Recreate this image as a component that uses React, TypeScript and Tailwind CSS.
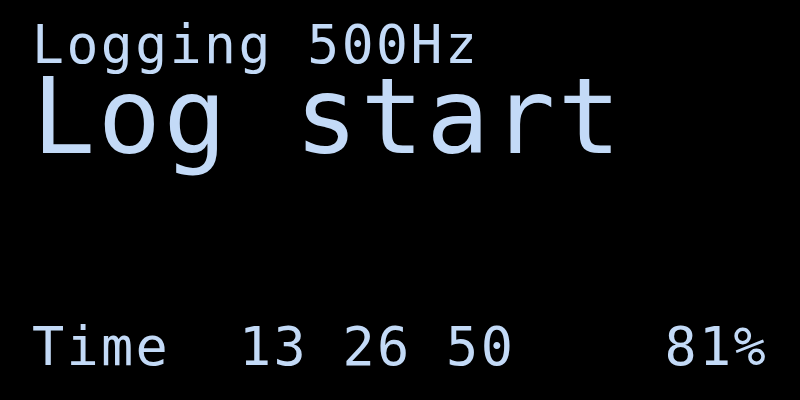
import React from 'react';

// Pixel-style OLED logger screen
const App: React.FC = () => {
  return (
    <div
      className="w-[800px] h-[400px] bg-black text-[#c3daf7] flex flex-col px-[32px] pt-[22.5px] pb-[31.5px] overflow-hidden"
      style={{ fontFamily: '"DejaVu Sans Mono", "Liberation Mono", monospace' }}
    >
      <div className="text-[53px] leading-[44px] tracking-[2.5px] whitespace-pre">Logging 500Hz</div>
      <div className="text-[105px] leading-[80px] tracking-[2.5px] whitespace-pre mt-[10px]">Log start</div>
      <div className="mt-auto flex justify-between text-[53.5px] leading-[44px] tracking-[2.3px] whitespace-pre">
        <span>Time  13 26 50</span>
        <span>81%</span>
      </div>
    </div>
  );
};

export default App;
